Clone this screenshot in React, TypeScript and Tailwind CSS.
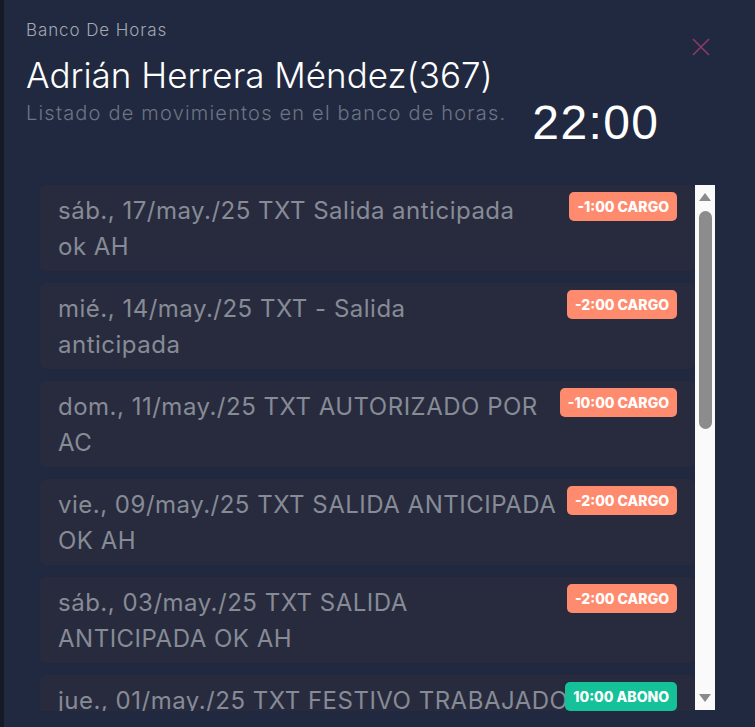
type Movement = {
  lines: [string, string?];
  amount: string;
  kind: "cargo" | "abono";
};

const movements: Movement[] = [
  { lines: ["sáb., 17/may./25 TXT Salida anticipada", "ok AH"], amount: "-1:00 CARGO", kind: "cargo" },
  { lines: ["mié., 14/may./25 TXT - Salida", "anticipada"], amount: "-2:00 CARGO", kind: "cargo" },
  { lines: ["dom., 11/may./25 TXT AUTORIZADO POR", "AC"], amount: "-10:00 CARGO", kind: "cargo" },
  { lines: ["vie., 09/may./25 TXT SALIDA ANTICIPADA", "OK AH"], amount: "-2:00 CARGO", kind: "cargo" },
  { lines: ["sáb., 03/may./25 TXT SALIDA", "ANTICIPADA OK AH"], amount: "-2:00 CARGO", kind: "cargo" },
  { lines: ["jue., 01/may./25 TXT FESTIVO TRABAJADO"], amount: "10:00 ABONO", kind: "abono" },
];

function Scrollbar() {
  return (
    <div className="flex h-[525px] w-[20px] shrink-0 flex-col items-center bg-[#fafafa] pt-[7px] pb-[7px]">
      <svg width="14" height="10" viewBox="0 0 14 10">
        <path d="M7 1 L13 9 L1 9 Z" fill="#8a8a8a" />
      </svg>
      <div className="mt-[9px] h-[218px] w-[13px] rounded-full bg-[#8c8c8c]" />
      <div className="flex-1" />
      <svg width="14" height="10" viewBox="0 0 14 10">
        <path d="M1 1 L13 1 L7 9 Z" fill="#8a8a8a" />
      </svg>
    </div>
  );
}

export default function App() {
  return (
    <div className="flex h-[727px] w-[755px] overflow-hidden bg-[#171b28] font-['Inter',sans-serif]">
      <div className="w-[4px] shrink-0 bg-[#161a26]" />
      <div className="relative flex flex-1 flex-col bg-[#212940] pl-[22px]">
        {/* close */}
        <button className="absolute right-[45px] top-[38px]">
          <svg width="18" height="18" viewBox="0 0 18 18">
            <path d="M1 1 L17 17 M17 1 L1 17" stroke="#8e3a66" strokeWidth="1.6" />
          </svg>
        </button>

        <p className="mt-[19px] text-[17px] leading-[22px] font-light tracking-[0.9px] text-[#a3a7b2]">
          Banco De Horas
        </p>
        <h1 className="mt-[12px] text-[35px] leading-[44px] font-light text-white">
          Adrián Herrera Méndez(367)
        </h1>
        <div className="flex items-start">
          <p className="mt-[2px] text-[20px] leading-[28px] font-light tracking-[1.2px] text-[#6d7484]">
            Listado de movimientos en el banco de horas.
          </p>
          <span className="ml-[26px] mt-[-2px] font-['Liberation_Sans',Arial,sans-serif] text-[48px] leading-[56px] tracking-[1.4px] text-white">
            22:00
          </span>
        </div>

        <div className="mt-[29px] ml-[14px] flex h-[531px] overflow-hidden">
          <div className="mt-[5px] flex w-[655px] flex-col gap-[12px]">
            {movements.map((m, i) => (
              <div
                key={i}
                className="flex h-[86px] shrink-0 items-start justify-between gap-1 rounded-[6px] bg-[#282b3e] pl-[18px] pr-[18px] pt-[8px]"
              >
                <div className="min-w-0 text-[24px] leading-[36px] tracking-[0.5px] text-[#868b96]">
                  {m.lines.map((l, j) => (
                    <div key={j} className="whitespace-nowrap">
                      {l}
                    </div>
                  ))}
                </div>
                <span
                  className={
                    m.kind === "cargo"
                      ? "relative mt-[-1px] h-[29px] shrink-0 whitespace-nowrap rounded-[5px] bg-[#ff8b6f] px-[8px] text-[14px] leading-[29px] font-extrabold text-white"
                      : "relative mt-[-1px] h-[29px] shrink-0 whitespace-nowrap rounded-[5px] bg-[#14c198] px-[8px] text-[14px] leading-[29px] font-extrabold text-white"
                  }
                >
                  {m.amount}
                </span>
              </div>
            ))}
          </div>
          <div className="mt-[5px]">
            <Scrollbar />
          </div>
        </div>
      </div>
    </div>
  );
}
